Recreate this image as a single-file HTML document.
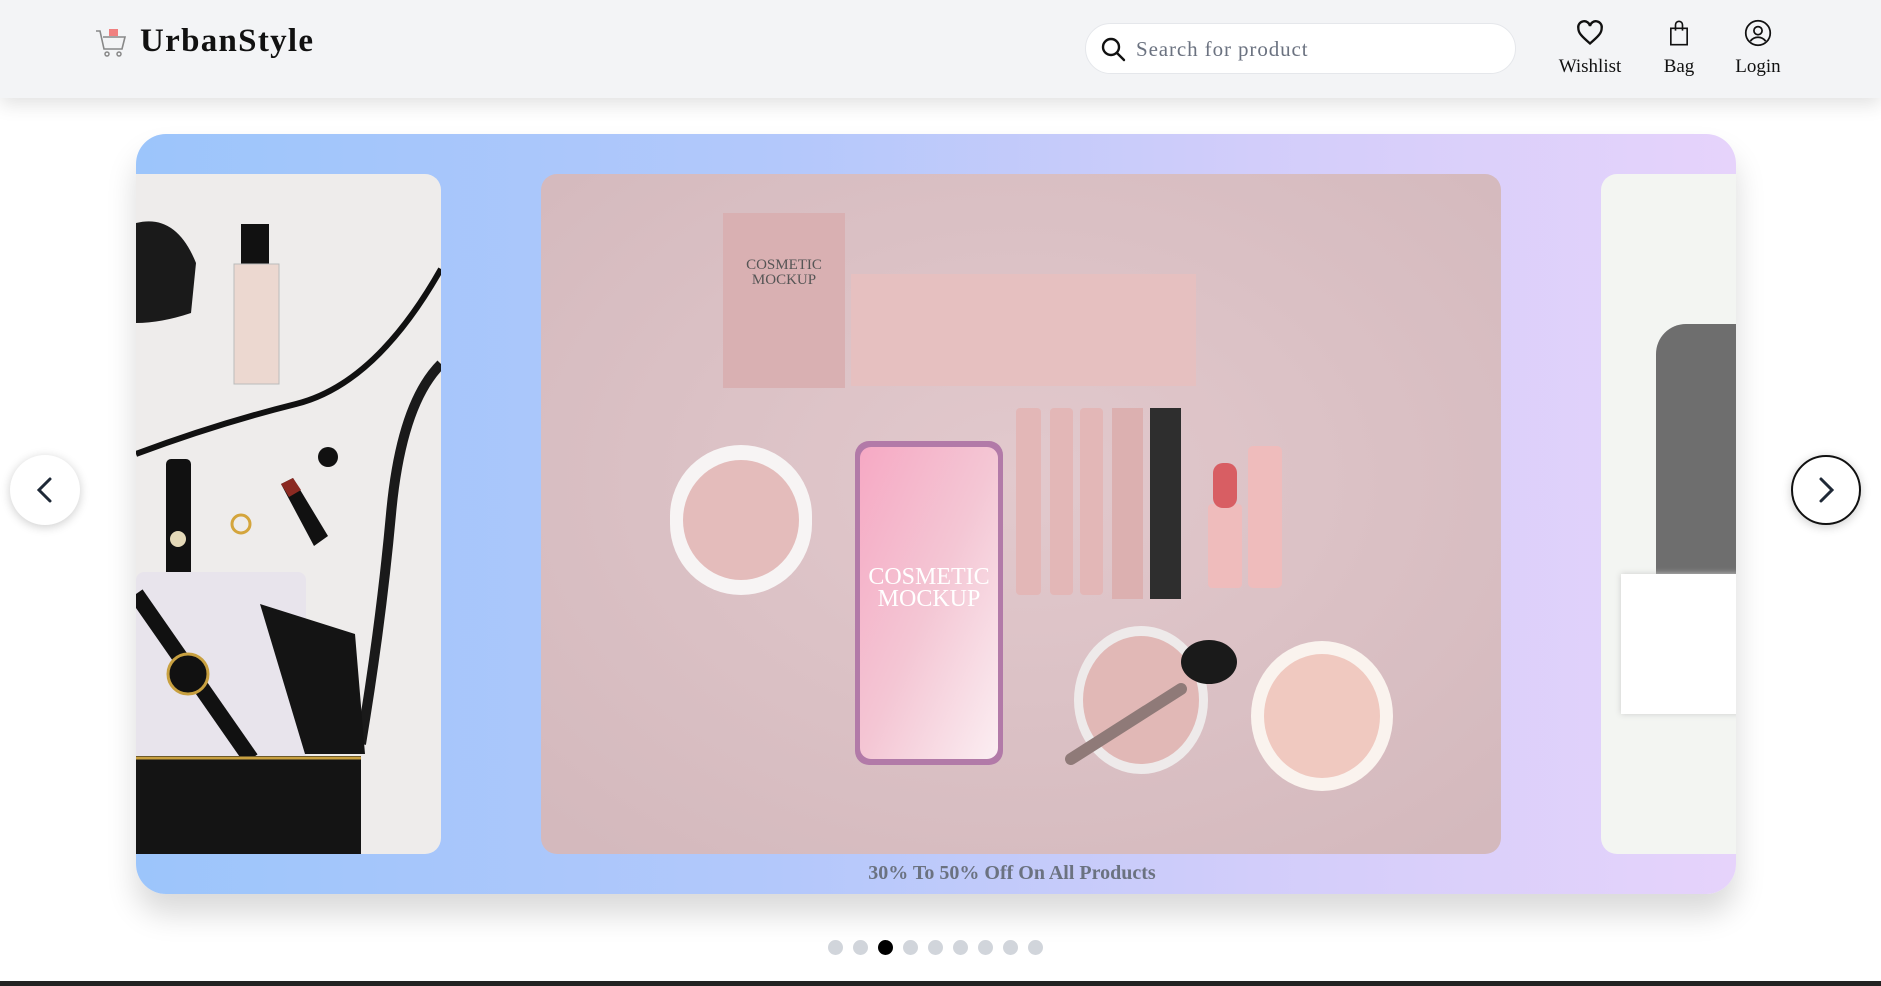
<!DOCTYPE html>
<html><head><meta charset="utf-8"><style>
*{margin:0;padding:0;box-sizing:border-box}
body{width:1881px;height:986px;overflow:hidden;background:#fff;font-family:"Liberation Serif",serif;position:relative}
.hdr{position:absolute;left:0;top:0;width:1881px;height:98px;background:#f3f4f6;box-shadow:0 6px 18px rgba(0,0,0,.12);z-index:5}
.logo{position:absolute;left:140px;top:23px;font-size:33px;font-weight:bold;color:#111;letter-spacing:1.3px}
.search{position:absolute;left:1085px;top:23px;width:431px;height:51px;background:#fff;border:1px solid #e5e7eb;border-radius:26px}
.search span{position:absolute;left:50px;top:13px;font-size:21px;color:#6b7280;letter-spacing:.9px}
.nav{position:absolute;top:19px;text-align:center;font-size:19px;color:#111}
.car{position:absolute;left:136px;top:134px;width:1600px;height:760px;border-radius:30px;background:linear-gradient(90deg,#9cc5fb,#b3c8fb 40%,#d2cdfa 70%,#e6d3fb);box-shadow:0 20px 30px rgba(0,0,0,.15);overflow:hidden}
.cap{position:absolute;left:76px;width:1600px;top:728px;text-align:center;font-size:20px;font-weight:bold;color:#6b7280}
.btn{position:absolute;width:70px;height:70px;border-radius:50%;background:#fff;top:455px;box-shadow:0 2px 10px rgba(0,0,0,.2);z-index:6}
.dot{position:absolute;top:940px;width:15px;height:15px;border-radius:50%;background:#d1d5db}
</style></head><body>
<div class="hdr">
 <svg style="position:absolute;left:95px;top:26px" width="32" height="34" viewBox="0 0 32 34"><path d="M1 5h4l4 18h18l3-12H8" fill="none" stroke="#888" stroke-width="1.6"/><circle cx="12" cy="28" r="2" fill="none" stroke="#888" stroke-width="1.5"/><circle cx="24" cy="28" r="2" fill="none" stroke="#888" stroke-width="1.5"/><rect x="14" y="3" width="9" height="7" fill="#f08080"/></svg>
 <div class="logo">UrbanStyle</div>
 <div class="search"><svg style="position:absolute;left:14px;top:12px" width="26" height="26" viewBox="0 0 26 26"><circle cx="11" cy="11" r="8" fill="none" stroke="#111" stroke-width="2.4"/><path d="M17 17l7 7" stroke="#111" stroke-width="2.4" stroke-linecap="round"/></svg><span>Search for product</span></div>
 <div class="nav" style="left:1550px;width:80px"><svg width="28" height="28" viewBox="0 0 24 24"><path d="M12 21C5 15 2 12 2 8a5 5 0 0 1 10-2 5 5 0 0 1 10 2c0 4-3 7-10 13z" fill="none" stroke="#111" stroke-width="2"/></svg><div style="margin-top:3px">Wishlist</div></div>
 <div class="nav" style="left:1649px;width:60px"><svg width="28" height="28" viewBox="0 0 24 24"><path d="M5 8h14v14H5z" fill="none" stroke="#111" stroke-width="1.4"/><path d="M9 10V5a3 3 0 0 1 6 0v5" fill="none" stroke="#111" stroke-width="1.4"/></svg><div style="margin-top:3px">Bag</div></div>
 <div class="nav" style="left:1726px;width:64px"><svg width="28" height="28" viewBox="0 0 24 24"><circle cx="12" cy="12" r="10.5" fill="none" stroke="#111" stroke-width="1.5"/><circle cx="12" cy="10" r="3.5" fill="none" stroke="#111" stroke-width="1.5"/><path d="M5.5 19a8 8 0 0 1 13 0" fill="none" stroke="#111" stroke-width="1.5"/></svg><div style="margin-top:3px">Login</div></div>
</div>

<div class="car">
 <svg style="position:absolute;left:0;top:40px;border-radius:0 16px 16px 0" width="305" height="680" viewBox="0 0 305 680">
  <rect width="305" height="680" fill="#eeeceb"/>
  <path d="M0 49q40-10 60 40l-5 50q-30 10-55 10z" fill="#1a1a1a"/>
  <rect x="105" y="50" width="28" height="45" fill="#111"/><rect x="98" y="90" width="45" height="120" fill="#ecd8d0" stroke="#bbb"/>
  <path d="M0 280q80-30 160-50t145-135" fill="none" stroke="#111" stroke-width="6"/>
  <path d="M305 190q-40 40-50 150t-30 230" fill="none" stroke="#1a1a1a" stroke-width="10"/>
  <circle cx="192" cy="283" r="10" fill="#111"/>
  <path d="M145 310l12-6 35 58-14 10z" fill="#111"/><path d="M145 310l12-6 8 12-12 7z" fill="#8b2a22"/>
  <circle cx="105" cy="350" r="9" fill="none" stroke="#d4a53c" stroke-width="3"/>
  <rect x="30" y="285" width="25" height="120" rx="5" fill="#111"/><circle cx="42" cy="365" r="8" fill="#e4d9b8"/>
  <rect x="0" y="398" width="170" height="190" rx="8" fill="#e8e4ec"/>
  <path d="M124 430l95 30 10 120h-60z" fill="#141414"/>
  <path d="M0 420l115 165" stroke="#111" stroke-width="16"/>
  <circle cx="52" cy="500" r="20" fill="#111" stroke="#c8a040" stroke-width="3"/>
  <rect x="0" y="582" width="225" height="98" fill="#141414"/>
  <path d="M0 584h225" stroke="#c8a040" stroke-width="3"/>
 </svg>

 <svg style="position:absolute;left:405px;top:40px" width="960" height="680" viewBox="0 0 960 680">
  <defs><clipPath id="c"><rect width="960" height="680" rx="16"/></clipPath>
  <linearGradient id="ph" x1="0" y1="0" x2="1" y2="1"><stop offset="0" stop-color="#f6a9c4"/><stop offset=".5" stop-color="#f4c6d4"/><stop offset="1" stop-color="#fbeef2"/></linearGradient>
  <radialGradient id="bg" cx=".5" cy=".45" r=".7"><stop offset="0" stop-color="#e2c9cd"/><stop offset="1" stop-color="#d4b9bd"/></radialGradient></defs>
  <g clip-path="url(#c)">
  <rect width="960" height="680" fill="url(#bg)"/>
  <rect x="182" y="39" width="122" height="175" fill="#d9b0b2"/>
  <text x="243" y="95" font-size="15" text-anchor="middle" fill="#555" font-family="Liberation Serif">COSMETIC</text>
  <text x="243" y="110" font-size="15" text-anchor="middle" fill="#555" font-family="Liberation Serif">MOCKUP</text>
  <rect x="310" y="100" width="345" height="112" fill="#e6c0c0"/>
  <rect x="129" y="271" width="142" height="150" rx="71" fill="#f7f4f4"/><ellipse cx="200" cy="346" rx="58" ry="60" fill="#e4bcbb"/>
  <rect x="314" y="267" width="148" height="324" rx="14" fill="#b27aa8"/><rect x="319" y="273" width="138" height="312" rx="11" fill="url(#ph)"/>
  <text x="388" y="410" font-size="24" text-anchor="middle" fill="#fff" font-family="Liberation Serif">COSMETIC</text>
  <text x="388" y="432" font-size="24" text-anchor="middle" fill="#fff" font-family="Liberation Serif">MOCKUP</text>
  <rect x="475" y="234" width="25" height="187" rx="4" fill="#e3b7b7"/><rect x="509" y="234" width="23" height="187" rx="4" fill="#e3b7b7"/><rect x="539" y="234" width="23" height="187" rx="4" fill="#e3b7b7"/>
  <rect x="571" y="234" width="31" height="191" fill="#dcb0b0"/><rect x="609" y="234" width="31" height="191" fill="#2e2e2e"/>
  <rect x="667" y="330" width="34" height="84" rx="4" fill="#efbcbc"/><rect x="672" y="289" width="24" height="45" rx="10" fill="#d85e63"/>
  <rect x="707" y="272" width="34" height="142" rx="5" fill="#efbcbc"/>
  <ellipse cx="600" cy="526" rx="67" ry="74" fill="#eeeaea"/><ellipse cx="600" cy="526" rx="58" ry="64" fill="#e1b8b6"/>
  <path d="M530 585l110-70" stroke="#8f7a78" stroke-width="12" stroke-linecap="round"/><ellipse cx="668" cy="488" rx="28" ry="22" fill="#1a1a1a"/>
  <ellipse cx="781" cy="542" rx="71" ry="75" fill="#faf3ee"/><ellipse cx="781" cy="542" rx="58" ry="62" fill="#f0c9c0"/>
  </g>
 </svg>

 <div style="position:absolute;left:1465px;top:40px;width:200px;height:680px;border-radius:16px;background:#f3f5f2;overflow:hidden">
  <div style="position:absolute;left:55px;top:150px;width:100px;height:300px;background:#6e6e6e;border-radius:30px 0 0 30px"></div>
  <div style="position:absolute;left:20px;top:400px;width:120px;height:140px;background:#fff;box-shadow:0 0 6px #ccc"></div>
 </div>
 <div class="cap">30% To 50% Off On All Products</div>
</div>

<div class="btn" style="left:10px"><svg width="70" height="70" viewBox="0 0 70 70"><path d="M40 24L29 35l11 11" fill="none" stroke="#1f2937" stroke-width="3" stroke-linecap="round"/></svg></div>
<div class="btn" style="left:1791px;border:2px solid #111"><svg width="66" height="66" viewBox="0 0 66 66"><path d="M28 22l11 11-11 11" fill="none" stroke="#1f2937" stroke-width="3" stroke-linecap="round"/></svg></div>

<div class="dot" style="left:828px"></div><div class="dot" style="left:853px"></div><div class="dot" style="left:878px;background:#000"></div><div class="dot" style="left:903px"></div><div class="dot" style="left:928px"></div><div class="dot" style="left:953px"></div><div class="dot" style="left:978px"></div><div class="dot" style="left:1003px"></div><div class="dot" style="left:1028px"></div>
<div style="position:absolute;left:0;top:981px;width:1881px;height:5px;background:#222"></div>
</body></html>
